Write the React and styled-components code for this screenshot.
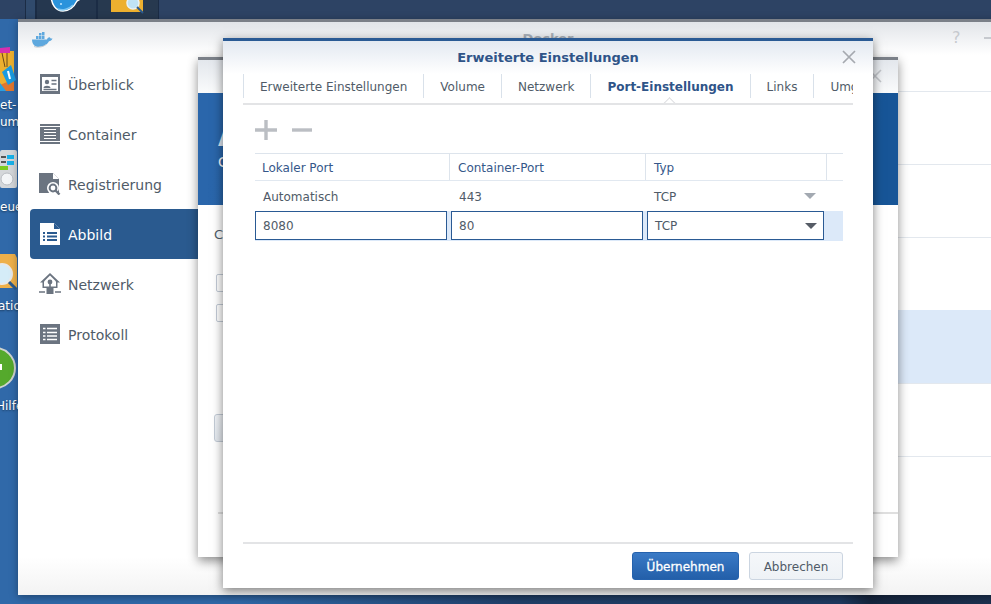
import React from "react";
import styled, { createGlobalStyle } from "styled-components";

const GlobalStyle = createGlobalStyle`
  html, body {
    margin: 0;
    padding: 0;
    height: 100%;
    overflow: hidden;
  }
  * {
    box-sizing: border-box;
  }
  body {
    font-family: "DejaVu Sans", Verdana, sans-serif;
  }
`;

const Desktop = styled.div`
  position: relative;
  width: 991px;
  height: 604px;
  overflow: hidden;
  background: linear-gradient(90deg, #3069a9 0, #3069a9 240px, #21406a 520px, #1f3a60 840px, #16263f 870px, #1c3150 991px);
`;

const Taskbar = styled.div`
  display: flex;
  height: 19px;
  background: #2d4364;
  padding-left: 25px;
`;

const TaskButton = styled.div`
  display: flex;
  justify-content: center;
  overflow: hidden;
  width: ${(p) => p.$w}px;
  background: ${(p) => p.$bg};
  border-left: 1px solid #1b2c45;
  border-right: 1px solid #1b2c45;
`;

const DesktopIcon = styled.div`
  position: absolute;
  left: ${(p) => p.$x}px;
  top: ${(p) => p.$y}px;
  line-height: 0;
`;

const DesktopLabel = styled.div`
  position: absolute;
  left: ${(p) => p.$x}px;
  top: ${(p) => p.$y}px;
  font-size: 12px;
  line-height: 17px;
  color: #fff;
  white-space: pre;
  text-shadow: 0 1px 2px rgba(0, 0, 0, 0.5);
`;

const MainWindow = styled.div`
  position: absolute;
  left: 18px;
  top: 19px;
  width: 1060px;
  height: 576px;
  display: flex;
  flex-direction: column;
  border-top: 3px solid #7b8088;
  background: linear-gradient(180deg, #fff 0, #fff 535px, #f3f3f3 573px);
  box-shadow: 0 2px 8px rgba(0, 0, 0, 0.35);
`;

const MainHeader = styled.div`
  position: relative;
  flex: 0 0 33px;
  display: flex;
  align-items: center;
  justify-content: center;
  background: linear-gradient(180deg, #e2e5e9, #fff);
`;

const MainTitle = styled.div`
  font-size: 13px;
  font-weight: bold;
  color: #a9b0b9;
`;

const Whale = styled.svg`
  position: absolute;
  left: 13px;
  top: 9px;
`;

const HelpGlyph = styled.div`
  position: absolute;
  left: 934px;
  top: 7px;
  font-size: 16px;
  line-height: 18px;
  color: #c6c9ce;
`;

const MinimizeBar = styled.div`
  position: absolute;
  left: 966px;
  top: 15px;
  width: 20px;
  height: 2px;
  background: #c6c9ce;
`;

const MainBody = styled.div`
  flex: 1;
  display: flex;
`;

const Sidebar = styled.nav`
  flex: 0 0 180px;
  padding: 4px 0 0 12px;
  display: flex;
  flex-direction: column;
`;

const NavItem = styled.div`
  height: 50px;
  display: flex;
  align-items: center;
  gap: 8px;
  padding-left: 10px;
  font-size: 14px;
  color: ${(p) => (p.$active ? "#fff" : "#505b68")};
  background: ${(p) => (p.$active ? "#2a5a8f" : "transparent")};
  border-radius: 4px 0 0 4px;
`;

const NavLabel = styled.span`
  padding-top: 2px;
`;

const IconSlot = styled.span`
  width: 20px;
  display: flex;
  justify-content: center;
`;

const ImageList = styled.div`
  flex: 1;
  padding-top: 36px;
`;

const ListRow = styled.div`
  height: 73px;
  border-top: 1px solid ${(p) => (p.$selected ? "#dce9f9" : "#e3e8ee")};
  background: ${(p) => (p.$selected ? "#dce9f9" : "transparent")};
`;

const BackDialog = styled.div`
  position: absolute;
  left: 198px;
  top: 57px;
  width: 700px;
  height: 500px;
  display: flex;
  flex-direction: column;
  background: #fff;
  border-top: 3px solid #7b8088;
  box-shadow: 0 4px 10px rgba(0, 0, 0, 0.45);
`;

const BackHeader = styled.div`
  position: relative;
  flex: 0 0 33px;
  background: linear-gradient(180deg, #e3e7ec, #fafbfc);
`;

const BackClose = styled.svg`
  position: absolute;
  right: 16px;
  top: 9px;
`;

const Banner = styled.div`
  flex: 0 0 112px;
  padding: 28px 0 0 20px;
  color: #fff;
  background: linear-gradient(100deg, #2a66ab 0, #2a66ab 25px, #175597 680px);
`;

const BannerTitle = styled.div`
  font-size: 26px;
  font-weight: bold;
  line-height: 32px;
  color: #dfe8f3;
`;

const BannerSub = styled.div`
  font-size: 14px;
  line-height: 18px;
`;

const BackContent = styled.div`
  flex: 1;
  display: flex;
  flex-direction: column;
  padding: 22px 0 0 16px;
`;

const BackLabel = styled.div`
  font-size: 13px;
  line-height: 16px;
  color: #505b68;
  margin-bottom: 31px;
`;

const BackCheck = styled.div`
  width: 18px;
  height: 18px;
  margin: 0 0 12px 2px;
  border: 1px solid #c3cbd6;
  border-radius: 2px;
  background: #fff;
`;

const BackButton = styled.div`
  width: 80px;
  height: 28px;
  margin-top: 80px;
  border: 1px solid #c3cbd6;
  border-radius: 3px;
  background: linear-gradient(180deg, #f0f3f7, #e4e9ef);
`;

const BackRule = styled.div`
  height: 2px;
  margin: 70px 0 0 4px;
  background: #dfdfdf;
`;

const Dialog = styled.div`
  position: absolute;
  left: 223px;
  top: 38px;
  width: 650px;
  height: 550px;
  display: flex;
  flex-direction: column;
  padding: 0 20px;
  background: #fff;
  border-top: 3px solid #2a5a94;
  box-shadow: 0 3px 10px rgba(0, 0, 0, 0.5);
`;

const DialogHeader = styled.div`
  position: relative;
  flex: 0 0 33px;
  margin: 0 -20px;
  display: flex;
  align-items: center;
  justify-content: center;
  background: linear-gradient(180deg, #e3e9f1, #fff);
`;

const DialogTitle = styled.div`
  font-size: 13px;
  font-weight: bold;
  color: #2f5488;
`;

const CloseIcon = styled.svg`
  position: absolute;
  right: 17px;
  top: 9px;
`;

const Tabs = styled.div`
  position: relative;
  flex: 0 0 31px;
  display: flex;
  overflow: hidden;
  border-bottom: 2px solid #e3e4e6;
`;

const Tab = styled.div`
  height: 24px;
  display: flex;
  align-items: center;
  padding: 1px 16px 0;
  flex: 0 0 auto;
  font-size: 12px;
  font-weight: ${(p) => (p.$active ? "bold" : "normal")};
  color: ${(p) => (p.$active ? "#2f5488" : "#505b68")};
  border-left: 1px solid #d9e1ea;
  white-space: nowrap;
`;

const TabNotch = styled.div`
  position: absolute;
  left: 422px;
  bottom: -5px;
  width: 9px;
  height: 9px;
  background: #fff;
  border-left: 1px solid #dcdde0;
  border-top: 1px solid #dcdde0;
  transform: rotate(45deg);
`;

const Toolbar = styled.div`
  flex: 0 0 48px;
  display: flex;
  align-items: center;
  gap: 15px;
  padding: 2px 0 0 12px;
`;

const PortTable = styled.div`
  margin-left: 12px;
  margin-right: 10px;
`;

const HeaderRow = styled.div`
  display: grid;
  grid-template-columns: 195px 196px 181px 1fr;
  height: 28px;
  border-top: 1px solid #dde4ec;
  border-bottom: 1px solid #e1e8f0;
`;

const HeadCell = styled.div`
  display: flex;
  align-items: center;
  padding: 1px 0 0 ${(p) => p.$pad ?? 8}px;
  font-size: 12px;
  color: #35578a;
  border-right: ${(p) => (p.$last ? "none" : "1px solid #dde4ec")};
`;

const DataRow = styled.div`
  display: grid;
  grid-template-columns: 196px 196px 177px 1fr;
  height: 30px;
  align-items: ${(p) => (p.$selected ? "start" : "center")};
  background: ${(p) => (p.$selected ? "#dce9f9" : "#fff")};
`;

const DataCell = styled.div`
  position: relative;
  padding: 1px 0 0 ${(p) => p.$pad ?? 8}px;
  font-size: 12px;
  color: #505b68;
`;

const Editor = styled.div`
  position: relative;
  height: 29px;
  width: ${(p) => p.$w}px;
  display: flex;
  align-items: center;
  padding: 1px 0 0 7px;
  font-size: 12px;
  color: #505b68;
  background: #fff;
  border: 1px solid #2a5a94;
`;

const Arrow = styled.span`
  position: absolute;
  right: ${(p) => p.$right}px;
  top: 50%;
  margin-top: -3px;
  width: 0;
  height: 0;
  border-left: 6px solid transparent;
  border-right: 6px solid transparent;
  border-top: 6px solid ${(p) => (p.$muted ? "#a3a9b1" : "#565c66")};
`;

const Spacer = styled.div`
  flex: 1;
`;

const Footer = styled.div`
  flex: 0 0 46px;
  display: flex;
  justify-content: flex-end;
  gap: 10px;
  padding: 8px 10px 0 0;
  border-top: 2px solid #e3e4e6;
`;

const Button = styled.div`
  height: 28px;
  width: ${(p) => p.$w}px;
  display: flex;
  align-items: center;
  justify-content: center;
  padding-top: 1px;
  font-size: 12px;
  border-radius: 3px;
  -webkit-text-stroke: ${(p) => (p.$primary ? "0.3px #fff" : "0")};
  color: ${(p) => (p.$primary ? "#fff" : "#505b68")};
  background: ${(p) =>
    p.$primary
      ? "linear-gradient(180deg, #3a7ac6, #235fa9)"
      : "linear-gradient(180deg, #f5f7fa, #eef2f6)"};
  border: 1px solid ${(p) => (p.$primary ? "#2562ad" : "#cbd5e1")};
`;

const gray = "#6b7480";

const OverviewIcon = () => (
  <svg width="20" height="20" viewBox="0 0 20 20">
    <rect x="0" y="0" width="20" height="20" fill={gray} />
    <rect x="2" y="3" width="16" height="14" fill="#fff" />
    <circle cx="7" cy="8" r="2.2" fill={gray} />
    <path d="M3.5 14c0-3 7-3 7 0z" fill={gray} />
    <path d="M11.5 6.500h5M11.500 10h5M3.500 15.500h13" stroke={gray} strokeWidth="1.4" />
  </svg>
);

const ContainerIcon = () => (
  <svg width="20" height="20" viewBox="0 0 20 20">
    <rect x="0" y="0" width="20" height="2" fill={gray} />
    <rect x="0" y="18" width="20" height="2" fill={gray} />
    <rect x="0" y="3" width="20" height="14" fill={gray} />
    <path d="M4 5.500h12M4 8.500h12M4 11.500h12M4 14.500h12" stroke="#fff" strokeWidth="1.2" />
  </svg>
);

const RegistryIcon = () => (
  <svg width="22" height="22" viewBox="0 0 22 22" style={{ flexShrink: 0 }}>
    <path d="M0 0h14l6 6v14H0z" fill={gray} />
    <path d="M14 0v6h6z" fill="#fff" />
    <circle cx="14" cy="15" r="6" fill="#fff" />
    <circle cx="14" cy="15" r="3.4" fill="none" stroke={gray} strokeWidth="2" />
    <path d="M16.500 17.500l4 4" stroke={gray} strokeWidth="2.4" />
  </svg>
);

const ImageIcon = () => (
  <svg width="20" height="22" viewBox="0 0 20 22">
    <path d="M0 0h14l6 6v16H0z" fill="#fff" />
    <path d="M14 0v6h6z" fill="#2a5a8f" />
    <path d="M3 10h2M7 10h10M3 13.500h2M7 13.500h10M3 17h2M7 17h10" stroke="#2a5a8f" strokeWidth="2" />
  </svg>
);

const NetworkIcon = () => (
  <svg width="22" height="22" viewBox="0 0 22 22" style={{ flexShrink: 0 }}>
    <path d="M11 0L1 9.500h2.500V15h15V9.500H21z" fill={gray} />
    <path d="M11 2.600L5 8.500v5h12v-5z" fill="#fff" />
    <circle cx="11" cy="9" r="2.4" fill={gray} />
    <path d="M11 11v4" stroke={gray} strokeWidth="1.6" />
    <rect x="7.500" y="15" width="7" height="6" fill={gray} />
    <path d="M0 19h6M16 19h6" stroke={gray} strokeWidth="1.6" />
  </svg>
);

const LogIcon = () => (
  <svg width="20" height="20" viewBox="0 0 20 20">
    <rect width="20" height="20" fill={gray} />
    <path d="M3 4.500h2.500M7 4.500h10M3 8.500h2.500M7 8.500h10M3 12h2.500M7 12h10M3 15.500h2.500M7 15.500h10" stroke="#fff" strokeWidth="1.6" />
  </svg>
);

const WhaleIcon = () => (
  <Whale width="22" height="17" viewBox="0 0 22 17">
    <path d="M1 8.500h15c.5-1.500 2-2.500 3-2 .3 1 1 1 2.500 1-.8 2-2 2.500-3.500 2.800C16 14 12 16 7 16 3 16 1 12 1 8.500z" fill="#5ea8de" />
    <path d="M5 5h2.500v3H5zM8 5h2.500v3H8zM11 5h2.500v3H11zM8 2h2.500v2.500H8zM11 1h2.500v3.500H11z" fill="#5ea8de" />
    <path d="M3 15.500c4 1.500 9 .5 12-2" fill="none" stroke="#c9ccd0" strokeWidth="1" />
  </Whale>
);

const navItems = [
  ["Überblick", OverviewIcon],
  ["Container", ContainerIcon],
  ["Registrierung", RegistryIcon],
  ["Abbild", ImageIcon, true],
  ["Netzwerk", NetworkIcon],
  ["Protokoll", LogIcon],
];

const tabs = [
  { label: "Erweiterte Einstellungen" },
  { label: "Volume" },
  { label: "Netzwerk" },
  { label: "Port-Einstellungen", active: true },
  { label: "Links" },
  { label: "Umgebung" },
];

function App() {
  return (
    <Desktop>
      <GlobalStyle />
      <Taskbar>
        <TaskButton $w={11} $bg="#304a6c" />
        <TaskButton $w={61} $bg="#25374f">
          <svg width="36" height="13" viewBox="0 0 36 13">
            <path d="M2-6h27c1 3 3 3 5 2-2 3-4 4-6 5-3 6-8 10-14 10C7 11 2 5 2-6z" fill="#2a93dc" stroke="#fff" strokeWidth="1.5" />
            <path d="M9 9c5 2 11 0 15-4" fill="none" stroke="#7cc6f2" strokeWidth="1.5" />
            <circle cx="12" cy="4" r="1" fill="#bfe6ff" />
          </svg>
        </TaskButton>
        <TaskButton $w={62} $bg="#27394f">
          <svg width="34" height="14" viewBox="0 0 34 14">
            <rect x="0" y="0" width="32" height="12" fill="#edb02f" />
            <circle cx="22" cy="3" r="6" fill="#bfe3f5" stroke="#e8f2f7" strokeWidth="1.5" />
            <path d="M26 7l6 6" stroke="#2a5a8f" strokeWidth="2" />
          </svg>
        </TaskButton>
      </Taskbar>

      <DesktopIcon $x={0} $y={47}>
        <svg width="16" height="45" viewBox="0 0 16 45">
          <path d="M0 4h14v40H0z" fill="#edb02f" />
          <path d="M0 38l14-6v12H0z" fill="#e0762e" />
          <path d="M0 36l6 8H0z" fill="#2aa0e0" />
          <path d="M0 1l10-1v6H0z" fill="#d62fb0" />
          <path d="M2 6l3 14M7 6l0 14" stroke="#6b4a1a" strokeWidth="1" fill="none" />
          <path d="M2 25l9-7 5 15-8 5z" fill="#1a9be0" />
          <path d="M8 24l2 8" stroke="#fff" strokeWidth="2" />
        </svg>
      </DesktopIcon>
      <DesktopLabel $x={0} $y={97}>{"et-\num"}</DesktopLabel>
      <DesktopIcon $x={0} $y={150}>
        <svg width="17" height="38" viewBox="0 0 17 38">
          <rect x="0" y="0" width="17" height="38" rx="2" fill="#d4d7da" />
          <path d="M1 7h5M1 12h5" stroke="#555" strokeWidth="2" />
          <rect x="7" y="5" width="7" height="4" fill="#18b2ea" />
          <rect x="7" y="11" width="7" height="4" fill="#18b2ea" />
          <rect x="0" y="16" width="8" height="4" fill="#7ccb20" />
          <circle cx="7" cy="29" r="6" fill="#f3f5f7" stroke="#b9bdc2" />
        </svg>
      </DesktopIcon>
      <DesktopLabel $x={0} $y={199}>eue</DesktopLabel>
      <DesktopIcon $x={0} $y={254}>
        <svg width="18" height="38" viewBox="0 0 18 38">
          <path d="M0 0h15l2 4v30H0z" fill="#eeb04a" />
          <circle cx="2" cy="20" r="10" fill="#d5ecf8" stroke="#e8e8e8" strokeWidth="2" />
          <path d="M9 28l7 7" stroke="#2a5a8f" strokeWidth="3" />
        </svg>
      </DesktopIcon>
      <DesktopLabel $x={-2} $y={298}>atio</DesktopLabel>
      <DesktopIcon $x={0} $y={346}>
        <svg width="16" height="44" viewBox="0 0 16 44">
          <circle cx="-5" cy="22" r="20" fill="#55a92c" stroke="#cfd3d0" strokeWidth="2" />
          <path d="M0 18h2v6H0z" fill="#fff" />
        </svg>
      </DesktopIcon>
      <DesktopLabel $x={-4} $y={398}>Hilfe</DesktopLabel>

      <MainWindow>
        <MainHeader>
          <WhaleIcon />
          <MainTitle>Docker</MainTitle>
          <HelpGlyph>?</HelpGlyph>
          <MinimizeBar />
        </MainHeader>
        <MainBody>
          <Sidebar>
            {navItems.map(([label, Icon, active]) => (
              <NavItem key={label} $active={active}>
                <IconSlot>
                  <Icon />
                </IconSlot>
                <NavLabel>{label}</NavLabel>
              </NavItem>
            ))}
          </Sidebar>
          <ImageList>
            <ListRow />
            <ListRow />
            <ListRow />
            <ListRow $selected />
            <ListRow />
            <ListRow />
          </ImageList>
        </MainBody>
      </MainWindow>

      <BackDialog>
        <BackHeader>
          <BackClose width="14" height="14" viewBox="0 0 14 14">
            <path d="M1 1l12 12M13 1L1 13" stroke="#c2c5ca" strokeWidth="1.6" />
          </BackClose>
        </BackHeader>
        <Banner>
          <BannerTitle>Abbild</BannerTitle>
          <BannerSub>Container</BannerSub>
        </Banner>
        <BackContent>
          <BackLabel>Container</BackLabel>
          <BackCheck />
          <BackCheck />
          <BackButton />
          <BackRule />
        </BackContent>
      </BackDialog>

      <Dialog>
        <DialogHeader>
          <DialogTitle>Erweiterte Einstellungen</DialogTitle>
          <CloseIcon width="14" height="14" viewBox="0 0 14 14">
            <path d="M1 1l12 12M13 1L1 13" stroke="#a5a9af" strokeWidth="1.7" />
          </CloseIcon>
        </DialogHeader>
        <Tabs>
          {tabs.map((t) => (
            <Tab key={t.label} $active={t.active}>
              {t.label}
            </Tab>
          ))}
          <TabNotch />
        </Tabs>
        <Toolbar>
          <svg width="22" height="20" viewBox="0 0 22 20">
            <path d="M0 10h22M11 0v20" stroke="#bbbec3" strokeWidth="3.4" />
          </svg>
          <svg width="20" height="20" viewBox="0 0 20 20">
            <path d="M0 10h20" stroke="#bbbec3" strokeWidth="3.4" />
          </svg>
        </Toolbar>
        <PortTable>
          <HeaderRow>
            <HeadCell $pad={7}>Lokaler Port</HeadCell>
            <HeadCell>Container-Port</HeadCell>
            <HeadCell>Typ</HeadCell>
            <HeadCell $last />
          </HeaderRow>
          <DataRow>
            <DataCell>Automatisch</DataCell>
            <DataCell>443</DataCell>
            <DataCell $pad={7}>
              TCP
              <Arrow $muted $right={8} />
            </DataCell>
            <div />
          </DataRow>
          <DataRow $selected>
            <Editor $w={192}>8080</Editor>
            <Editor $w={192}>80</Editor>
            <Editor $w={177}>
              TCP
              <Arrow $right={6} />
            </Editor>
            <div />
          </DataRow>
        </PortTable>
        <Spacer />
        <Footer>
          <Button $primary $w={107}>Übernehmen</Button>
          <Button $w={94}>Abbrechen</Button>
        </Footer>
      </Dialog>
    </Desktop>
  );
}

export default App;
